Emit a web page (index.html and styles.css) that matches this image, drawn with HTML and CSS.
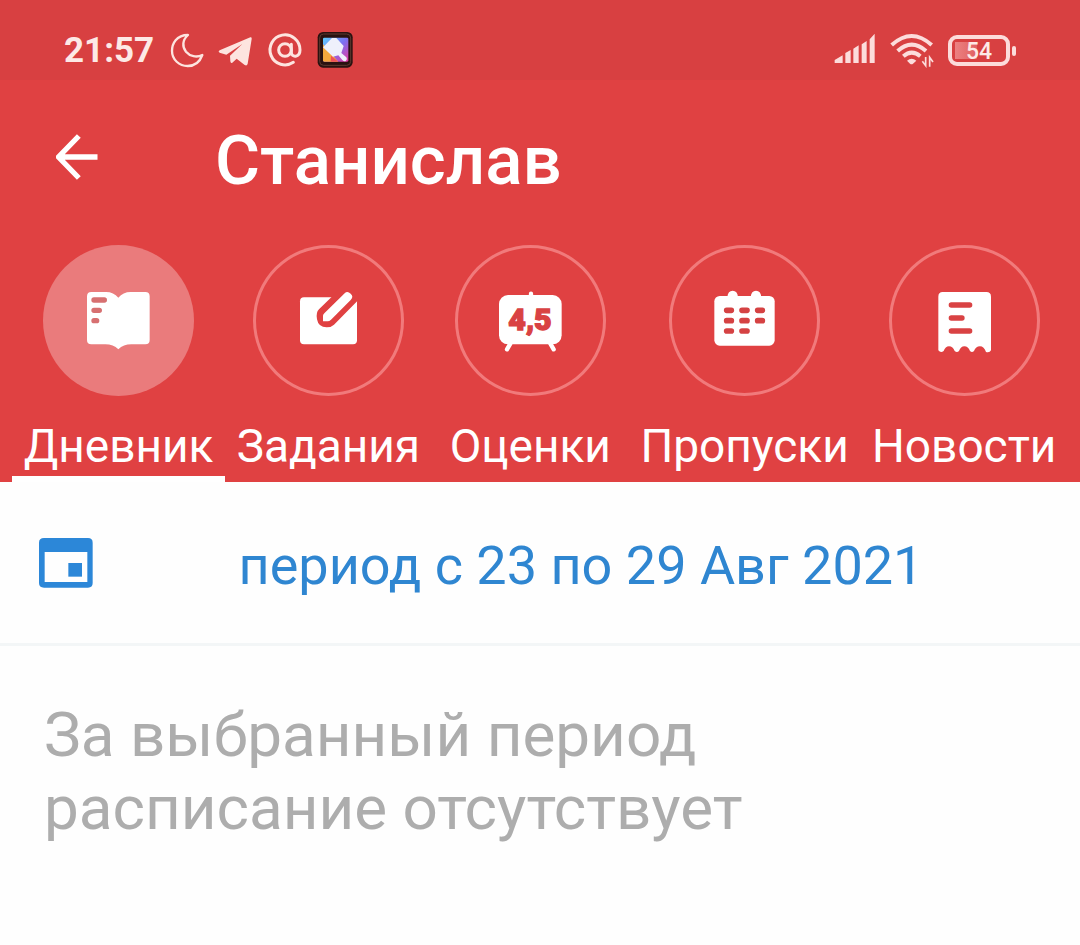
FILE: index.html
```html
<!DOCTYPE html>
<html lang="ru">
<head>
    <meta charset="UTF-8">
    <meta name="viewport" content="width=device-width, initial-scale=1.0">
    <title>Дневник</title>
    <link rel="stylesheet" href="styles.css">
</head>
<body>

    <div class="status-bar">
        <span class="time">21:57</span>
        <svg class="status-icons" viewBox="360 30 552 114" aria-hidden="true">
            <path d="M414 42C379 42 366 68 366 90C366 116 388 135 413 135C434 135 449 124 457 102C440 111 420 106 408 92C396 77 397 57 414 42Z" fill="none" stroke="#fde4df" stroke-width="7" stroke-linejoin="round"/>
            <path d="M601 49Q606 47 605 54L593 128Q591 136 584 132L560 113L547 125Q542 128 541 121L540 104L577 69L529 101L509 95Q503 92 509 88Z" fill="#fde4df"/>
            <g fill="none" stroke="#fde4df" stroke-width="9" stroke-linecap="round">
                <circle cx="705" cy="87" r="19"/>
                <path d="M724 70V94C724 111 750 110 750 87A45 45 0 1 0 730 124"/>
            </g>
            <defs>
                <linearGradient id="paint" x1="0" y1="0" x2="1" y2="1">
                    <stop offset="0" stop-color="#5fd0ff"/>
                    <stop offset="0.5" stop-color="#7b6ff0"/>
                    <stop offset="1" stop-color="#e83ba0"/>
                </linearGradient>
            </defs>
            <rect x="803" y="33" width="105" height="107" rx="16" fill="#2a1210"/>
            <rect x="809" y="39" width="93" height="94" rx="12" fill="none" stroke="#5c3a30" stroke-width="3"/>
            <rect x="819" y="50" width="76" height="72" rx="4" fill="url(#paint)"/>
            <path d="M819 70V118Q819 122 823 122H865Z" fill="#f5a83c"/>
            <path d="M843 104L865 122H842Z" fill="#ee5058"/>
            <path d="M819 79L846 51H859L881 75L874 96L889 109Q893 115 888 119Q883 123 877 117L865 103L849 107Z" fill="#eef0fb"/>
        </svg>
        <div class="status-right">
            <svg class="signal" viewBox="40 36 300 108" aria-hidden="true">
                <path d="M42 120L66 106V129H42ZM74 99L90 90V129H74ZM98 86L114 76V129H98ZM123 73L138 63V129H123ZM147 58L162 41V129H147Z" fill="#fcdcdb"/>
                <g fill="none" stroke="#fcdcdb" stroke-width="12">
                    <path d="M213 75Q273 21 333 75"/>
                    <path d="M231 93Q273 55 316 93"/>
                    <path d="M248 109Q273 87 299 109"/>
                </g>
                <path d="M259 122Q273 110 287 122L277 131Q273 134 268 131Z" fill="#fcdcdb"/>
                <path d="M315 111V137L305 124M327 140V112L337 126" fill="none" stroke="#fcdcdb" stroke-width="5"/>
            </svg>
            <span class="battery">54</span>
        </div>
    </div>

    <header class="header">
        <div class="title-bar">
            <button class="back-button" type="button" aria-label="Назад">
                <svg viewBox="69 72 128 138"><path d="M137 78L76 141L137 204M76 141H193" fill="none" stroke="#fff" stroke-width="16"/></svg>
            </button>
            <h1>Станислав</h1>
        </div>

        <nav class="tabs">
            <a class="tab active" href="#diary">
                <svg class="tab-icon" viewBox="39 44 453 453">
                    <path d="M184 185H228Q251 185 265 202Q279 185 302 185H346Q359 185 359 198V329Q359 342 346 342H304Q280 342 265 357Q250 342 226 342H184Q171 342 171 329V198Q171 185 184 185Z" fill="#fff"/>
                    <path d="M192 209H223M192 240H208M192 271H200" stroke="#d77071" stroke-width="16" stroke-linecap="round"/>
                </svg>
                <span>Дневник</span>
            </a>
            <a class="tab" href="#tasks">
                <svg class="tab-icon" viewBox="36 44 453 453">
                    <rect x="177" y="201" width="171" height="141" rx="12" fill="#fff"/>
                    <path d="M274 198L234 237Q224 247 228 267Q232 291 257 291Q271 291 279 283L352 209V180H292Z" fill="#e04142"/>
                    <path d="M246 273V256Q246 253 250 249L311 189Q319 181 329 190Q339 198 329 209L270 268Q265 273 260 273Z" fill="#fff"/>
                </svg>
                <span>Задания</span>
            </a>
            <a class="tab" href="#marks">
                <svg class="tab-icon" viewBox="42 44 453 453">
                    <rect x="174" y="194" width="188" height="148" rx="27" fill="#fff"/>
                    <path d="M270 190V200M208 340L198 357M328 340L338 357" stroke="#fff" stroke-width="13" stroke-linecap="round"/>
                    <text class="mark" x="267" y="300" text-anchor="middle">4,5</text>
                </svg>
                <span>Оценки</span>
            </a>
            <a class="tab" href="#absences">
                <svg class="tab-icon" viewBox="42 44 453 453">
                    <rect x="178" y="197" width="181" height="149" rx="16" fill="#fff"/>
                    <path d="M217 200Q219 181 233 181Q247 181 249 200ZM287 200Q289 181 303 181Q317 181 319 200Z" fill="#fff"/>
                    <path d="M215 240H229M261 240H276M308 240H322M215 271H229M261 271H276M308 271H322M215 302H229M261 302H276" stroke="#d54243" stroke-width="17" stroke-linecap="round"/>
                </svg>
                <span>Пропуски</span>
            </a>
            <a class="tab" href="#news">
                <svg class="tab-icon" viewBox="39 44 453 453">
                    <path d="M200 185H331Q345 185 345 199V360Q341 368 330 365Q324 348 312 348Q299 348 294 362Q288 368 282 362Q277 348 265 348Q254 348 249 362Q243 368 236 362Q231 348 219 348Q208 348 203 362Q194 369 187 360V199Q187 185 200 185Z" fill="#fff"/>
                    <path d="M226 224H281M226 263H258M226 302H281" stroke="#d94243" stroke-width="16" stroke-linecap="round"/>
                </svg>
                <span>Новости</span>
            </a>
        </nav>
    </header>

    <main>
        <button class="period" type="button">
            <svg class="calendar" viewBox="111 381 162 150" aria-hidden="true">
                <path fill-rule="evenodd" d="M126 381H258Q272 381 272 395V516Q272 530 258 530H126Q111 530 111 516V395Q111 381 126 381ZM128 423V513H256V423Z" fill="#2c87d8"/>
                <path d="M199 456H240V497H199Z" fill="#2c87d8"/>
            </svg>
            <span>период с 23 по 29 Авг 2021</span>
        </button>
        <p class="empty">За выбранный период расписание отсутствует</p>
    </main>

</body>
</html>
```
FILE: styles.css
```css
* {
    box-sizing: border-box;
}

body {
    margin: 0;
    font-family: Roboto, "Liberation Sans", sans-serif;
    background-color: #fefefe;
}

.status-bar {
    display: flex;
    align-items: center;
    height: 80px;
    padding: 20px 70px 0 64px;
    background-color: #d84041;
    color: #fde9e6;
}

.time {
    width: 106px;
    font-size: 35px;
    font-weight: 700;
}

.status-icons {
    width: 184px;
    height: 38px;
}

.status-right {
    display: flex;
    align-items: center;
    gap: 14px;
    margin-left: auto;
}

.signal {
    width: 100px;
    height: 36px;
}

.battery {
    position: relative;
    width: 62px;
    height: 31px;
    border: 4px solid #fcdcdb;
    border-radius: 9px;
    background: linear-gradient(to right, #ec8182, #e06061) 3px 3px / 22px 17px no-repeat;
    font-size: 23px;
    font-weight: 500;
    line-height: 25px;
    text-align: center;
}

/* battery tip */
.battery::after {
    content: "";
    position: absolute;
    top: 7px;
    right: -10px;
    width: 4px;
    height: 10px;
    border-radius: 2px;
    background-color: #fcdcdb;
}

.header {
    background-color: #e04142;
    color: white;
}

.title-bar {
    display: flex;
    align-items: center;
    gap: 116px;
    height: 165px;
    padding: 0 56px 12px;
}

.back-button {
    padding: 0;
    border: none;
    background: none;
    cursor: pointer;
}

.back-button svg {
    display: block;
    width: 43px;
    height: 46px;
}

h1 {
    margin: 0;
    padding-top: 8px;
    font-size: 69px;
    font-weight: 500;
    line-height: 80px;
}

.tabs {
    display: flex;
    padding: 0 12px;
}

.tab {
    display: flex;
    flex-direction: column;
    align-items: center;
    min-width: 197px;
    padding: 0 12px 2px;
    border-bottom: 6px solid transparent;
    color: white;
    font-size: 46px;
    line-height: 56px;
    text-decoration: none;
}

.tab.active {
    border-bottom-color: white;
}

.tab-icon {
    width: 151px;
    height: 151px;
    margin-bottom: 22px;
    border-radius: 50%;
    box-shadow: inset 0 0 0 3px #f17a7b;
}

.active .tab-icon {
    background-color: #ea7b7c;
    box-shadow: none;
}

.mark {
    fill: #d94243;
    stroke: #d94243;
    stroke-width: 4px;
    font-size: 91px;
    font-weight: 900;
}

.period {
    display: flex;
    align-items: center;
    width: 100%;
    height: 164px;
    padding: 0 38px;
    border: none;
    border-bottom: 3px solid #f3f6f7;
    background: none;
    color: #2f86d1;
    font-family: inherit;
    font-size: 54px;
    cursor: pointer;
}

.period span {
    flex: 1;
    padding: 6px 0 0 26px;
}

.calendar {
    width: 56px;
    height: 50px;
}

.empty {
    max-width: 840px;
    margin: 0;
    padding: 52px 44px;
    color: #adadad;
    font-size: 62px;
    line-height: 73px;
}
```
